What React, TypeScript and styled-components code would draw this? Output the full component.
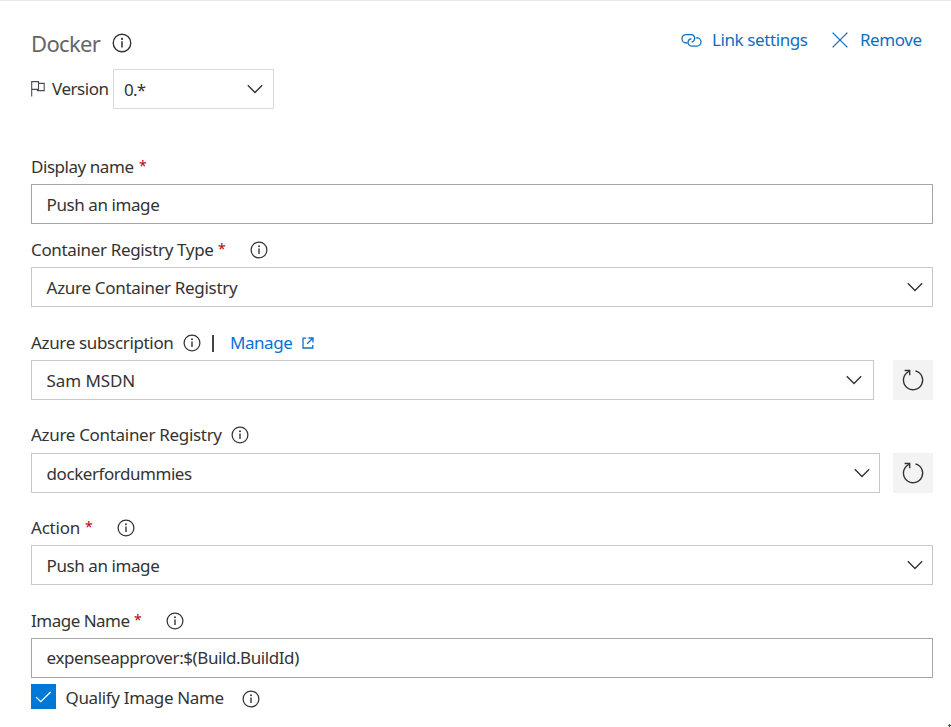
import React from "react";
import styled, { createGlobalStyle } from "styled-components";

const GlobalStyle = createGlobalStyle`
  *, *::before, *::after { box-sizing: border-box; }
  body {
    margin: 0;
    background: #fff;
    color: #333;
    font-family: "Segoe UI", "Noto Sans", sans-serif;
    font-size: 17px;
    overflow: hidden;
  }
`;

const Page = styled.main`
  position: relative;
  height: 727px;
  padding: 0 18px 0 31px;
  border-top: 1px solid #e6e6e6;
`;

const Header = styled.header`
  display: flex;
  justify-content: space-between;
  height: 60px;
  margin-bottom: 8px;
`;

const Title = styled.h1`
  display: flex;
  align-items: center;
  height: 24px;
  margin: 30px 0 0;
  color: #666;
  font-size: 22px;
  font-weight: 400;
`;

const Actions = styled.div`
  display: flex;
  align-items: center;
  height: 24px;
  margin-top: 27px;
  padding-right: 10px;
  color: #106ebe;
`;

const ActionLink = styled.a<{ $gap: number; $before?: number }>`
  display: flex;
  align-items: center;
  gap: ${(p) => p.$gap}px;
  margin-left: ${(p) => p.$before ?? 0}px;
  color: inherit;
  text-decoration: none;
`;

/* A run of text that occupies a set width, with its own tracking. */
const Run = styled.span<{ $w: number; $track?: number }>`
  flex: none;
  width: ${(p) => p.$w}px;
  letter-spacing: ${(p) => p.$track ?? -0.45}px;
  line-height: 24px;
  white-space: nowrap;
`;

const LoweredRun = styled(Run)`
  padding-top: 2px;
`;

const VersionRow = styled.div`
  display: flex;
  align-items: center;
  height: 40px;
  margin-bottom: 46px;
`;

const FlagIcon = styled.svg`
  flex: none;
  width: 15px;
  height: 16px;
  margin-right: 6px;
`;

const Field = styled.section<{ $gap: number }>`
  margin-bottom: ${(p) => p.$gap}px;
`;

const Label = styled.label<{ $lift?: number }>`
  display: flex;
  align-items: center;
  height: 24px;
  margin-bottom: ${(p) => 5 + (p.$lift ?? 0)}px;
`;

const Star = styled.span<{ $after?: number }>`
  width: 8px;
  height: 24px;
  margin-right: ${(p) => p.$after ?? 0}px;
  color: #b8000b;
  font-size: 14px;
  line-height: 22px;
`;

const ControlRow = styled.div`
  display: flex;
  justify-content: space-between;
`;

const Box = styled.div<{ $tone: string; $w: number; $inset?: number; $end?: number; $up?: number }>`
  display: flex;
  align-items: center;
  justify-content: space-between;
  width: ${(p) => p.$w}px;
  height: 40px;
  padding: 0 ${(p) => p.$end ?? 9}px ${(p) => p.$up ?? 0}px ${(p) => p.$inset ?? 14.6}px;
  border: 1px solid ${(p) => p.$tone};
  background: #fff;
`;

const RefreshButton = styled.button`
  display: flex;
  align-items: center;
  justify-content: center;
  width: 40px;
  height: 40px;
  padding: 0;
  border: 0;
  background: #f3f3f3;
`;

const Divider = styled.span`
  width: 2px;
  height: 17px;
  margin: 0 16px 0 11px;
  background: #444;
`;

const ManageLink = styled.a`
  display: flex;
  align-items: center;
  color: #0b71d0;
`;

const CheckRow = styled.div`
  display: flex;
  align-items: center;
  height: 25px;
`;

const CheckBox = styled.span`
  display: flex;
  align-items: center;
  justify-content: center;
  width: 25px;
  height: 25px;
  margin-right: 9.5px;
  background: #0078d7;
`;

const InfoDrop = styled.span`
  display: flex;
  margin-top: 5px;
`;

const CornerMark = styled.svg`
  position: absolute;
  right: 0;
  bottom: 0;
`;

const Info = ({ size = 18 }: { size?: number }) => (
  <svg width={size} height={size} viewBox="0 0 18 18" fill="none">
    <circle cx="9" cy="9" r="7.9" stroke="#333" strokeWidth="1.25" />
    <path d="M9 7.4V13" stroke="#333" strokeWidth="1.4" />
    <circle cx="9" cy="5.3" r=".95" fill="#333" />
  </svg>
);

const Chevron = () => (
  <svg width="16" height="10" viewBox="0 0 16 10" fill="none">
    <path d="M.8 1.2 8 8.4l7.2-7.2" stroke="#333" strokeWidth="1.4" />
  </svg>
);

const Refresh = () => (
  <svg width="24" height="24" viewBox="0 0 24 24" fill="none" stroke="#333" strokeWidth="1.35">
    <path d="M14.4 2.8A9.6 9.6 0 1 1 5.4 5.2L8.5 2.7" />
    <path d="M3.6 2.5H8.7V7.3" />
  </svg>
);

const LinkIcon = () => (
  <svg width="21" height="15" viewBox="0 0 21 15" fill="none" stroke="#106ebe" strokeWidth="1.3">
    <path d="M6.4 10H5.2A4.2 4.2 0 0 1 5.2 1.6H10A3.9 3.9 0 0 1 13.7 5.5C13.5 7.3 12.3 8.8 10.6 9" />
    <path d="M14.8 4.9h1.1a4.1 4.1 0 0 1 0 8.2H10.7A3.8 3.8 0 0 1 7 9.2C7.2 7.2 8.5 5.8 10.4 5.6" />
  </svg>
);

const CloseIcon = () => (
  <svg width="16" height="16" viewBox="0 0 16 16" fill="none" stroke="#106ebe" strokeWidth="1.3">
    <path d="M.6.6l14.8 14.8M15.4.6L.6 15.4" />
  </svg>
);

const ExternalIcon = () => (
  <svg width="12" height="12" viewBox="0 0 12 12" fill="none" stroke="#0b71d0" strokeWidth="1.3">
    <path d="M4.2 1.2H1V11H10.8V8" />
    <path d="M6.4 1H11V5.6M11 1 5.2 6.8" />
  </svg>
);

const LIGHT = "#c8c8c8";
const DARK = "#a6a6a6";

export default function App() {
  return (
    <>
      <GlobalStyle />
      <Page>
        <Header>
          <Title>
            <Run $w={81} $track={-0.65}>Docker</Run>
            <Info size={20} />
          </Title>
          <Actions>
            <ActionLink $gap={10}>
              <LinkIcon />
              <Run $w={96} $track={-0.4}>Link settings</Run>
            </ActionLink>
            <ActionLink $gap={12} $before={24}>
              <CloseIcon />
              <Run $w={63}>Remove</Run>
            </ActionLink>
          </Actions>
        </Header>

        <VersionRow>
          <FlagIcon viewBox="0 0 15 16" fill="none" stroke="#4a4a5a" strokeWidth="1.1">
            <path d="M.7 0V15.4M.7.6H7.5V8.4H.7M7.5 2.4H13.2V9.6H6.4V8.4" />
          </FlagIcon>
          <Run $w={61}>Version</Run>
          <Box $tone="#dadada" $w={161} $inset={10} $end={10}>
            <LoweredRun $w={30} $track={-0.8}>0.*</LoweredRun>
            <Chevron />
          </Box>
        </VersionRow>

        <Field $gap={14}>
          <Label>
            <Run $w={108}>Display name</Run>
            <Star>*</Star>
          </Label>
          <Box $tone={DARK} $w={902}>
            <LoweredRun $w={120} $track={-0.42}>Push an image</LoweredRun>
          </Box>
        </Field>

        <Field $gap={24}>
          <Label>
            <Run $w={187} $track={-0.34}>Container Registry Type</Run>
            <Star $after={24}>*</Star>
            <Info />
          </Label>
          <Box $tone={LIGHT} $w={902}>
            <LoweredRun $w={200} $track={-0.31}>Azure Container Registry</LoweredRun>
            <Chevron />
          </Box>
        </Field>

        <Field $gap={23}>
          <Label>
            <Run $w={152} $track={-0.34}>Azure subscription</Run>
            <Info />
            <Divider />
            <ManageLink>
              <Run $w={72}>Manage</Run>
              <ExternalIcon />
            </ManageLink>
          </Label>
          <ControlRow>
            <Box $tone={LIGHT} $w={843} $end={11}>
              <LoweredRun $w={100} $track={-0.1}>Sam MSDN</LoweredRun>
              <Chevron />
            </Box>
            <RefreshButton><Refresh /></RefreshButton>
          </ControlRow>
        </Field>

        <Field $gap={23}>
          <Label $lift={1}>
            <Run $w={200} $track={-0.31}>Azure Container Registry</Run>
            <Info />
          </Label>
          <ControlRow>
            <Box $tone={LIGHT} $w={849}>
              <LoweredRun $w={160}>dockerfordummies</LoweredRun>
              <Chevron />
            </Box>
            <RefreshButton><Refresh /></RefreshButton>
          </ControlRow>
        </Field>

        <Field $gap={24}>
          <Label>
            <Run $w={54} $track={-0.2}>Action</Run>
            <Star $after={24}>*</Star>
            <Info />
          </Label>
          <Box $tone={LIGHT} $w={902}>
            <LoweredRun $w={120} $track={-0.42}>Push an image</LoweredRun>
            <Chevron />
          </Box>
        </Field>

        <Field $gap={6}>
          <Label>
            <Run $w={103} $track={-0.5}>Image Name</Run>
            <Star $after={24}>*</Star>
            <Info />
          </Label>
          <Box $tone={DARK} $w={902} $up={2}>
            <LoweredRun $w={260} $track={-0.42}>expenseapprover:$(Build.BuildId)</LoweredRun>
          </Box>
        </Field>

        <CheckRow>
          <CheckBox>
            <svg width="17" height="12" viewBox="0 0 17 12" fill="none">
              <path d="M1.2 6.2 5.8 10.6 15.6 1" stroke="#fff" strokeWidth="1.3" />
            </svg>
          </CheckBox>
          <LoweredRun $w={176.5} $track={-0.35}>Qualify Image Name</LoweredRun>
          <InfoDrop><Info /></InfoDrop>
        </CheckRow>

        <CornerMark width="3" height="3" viewBox="0 0 3 3">
          <path d="M1 0h1v1h1v1H2v1H1V2H0V1h1z" fill="#3a3aff" />
        </CornerMark>
      </Page>
    </>
  );
}
